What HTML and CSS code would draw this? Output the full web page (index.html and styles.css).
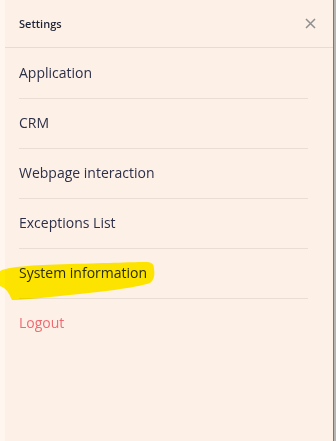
FILE: index.html
```html
<!DOCTYPE html>
<html lang="en">
<head>
    <meta charset="UTF-8">
    <meta name="viewport" content="width=device-width, initial-scale=1.0">
    <title>Settings</title>
    <link rel="stylesheet" href="styles.css">
</head>
<body>
    <div class="page">
        <div class="edge-left"></div>

        <!-- Settings drawer -->
        <aside class="panel">
            <header class="panel-header">
                <span class="panel-title">Settings</span>
                <button class="close-btn" aria-label="Close">
                    <svg width="11" height="11" viewBox="0 0 11 11">
                        <path d="M1 1 L10 10 M10 1 L1 10" stroke="#8f8f8f" stroke-width="1.5" fill="none"/>
                    </svg>
                </button>
            </header>

            <ul class="menu">
                <li class="menu-item">Application</li>
                <li class="menu-item">CRM</li>
                <li class="menu-item">Webpage interaction</li>
                <li class="menu-item">Exceptions List</li>
                <li class="menu-item">System information</li>
                <li class="menu-item logout">Logout</li>
            </ul>
        </aside>

        <div class="edge-right"></div>

        <!-- highlighter mark drawn over the screenshot -->
        <svg class="highlight" width="160" height="42" viewBox="0 0 160 42">
            <path d="M0 10 C8 6 30 4 70 3 C110 2 135 1 146 1 C152 1 154 3 154 8 C155 14 154 19 150 22 C135 27 100 31 60 35 C40 37 22 39 12 39 C10 35 9 31 4 27 L0 25 Z" fill="#fff200"/>
        </svg>
    </div>
</body>
</html>
```

FILE: styles.css
```css
body {
    margin: 0;
    padding: 0;
    font-family: "Open Sans", "Liberation Sans", sans-serif;
    background-color: #fff6f0;
}

.page {
    position: relative;
    display: flex;
    width: 336px;
    height: 441px;
    overflow: hidden;
}

.edge-left {
    width: 5px;
    background-color: #fff6f0;
}

.edge-right {
    width: 3px;
    border-left: 1px solid #7d7773;
    background-color: #b9b5b2;
    box-sizing: border-box;
}

.panel {
    flex: 1;
    background-color: #fdf0e7;
}

.panel-header {
    display: flex;
    align-items: center;
    justify-content: space-between;
    height: 47px;
    padding: 0 17px 0 14px;
    border-bottom: 1px solid #e6dcd5;
}

.panel-title {
    font-size: 11px;
    font-weight: 600;
    color: #1f2235;
}

.close-btn {
    display: flex;
    padding: 0;
    border: none;
    background: none;
    cursor: pointer;
}

.menu {
    list-style: none;
    margin: 1px 25px 0 14px;
    padding: 0;
}

.menu-item {
    display: flex;
    align-items: center;
    height: 47px;
    padding-bottom: 2px;
    font-size: 14px;
    color: #2c2f48;
    border-bottom: 1px solid #e8ded6;
}

.menu-item.logout {
    color: #ef6b73;
    border-bottom: none;
}

.highlight {
    position: absolute;
    left: 0;
    top: 261px;
    mix-blend-mode: multiply;
}
```
